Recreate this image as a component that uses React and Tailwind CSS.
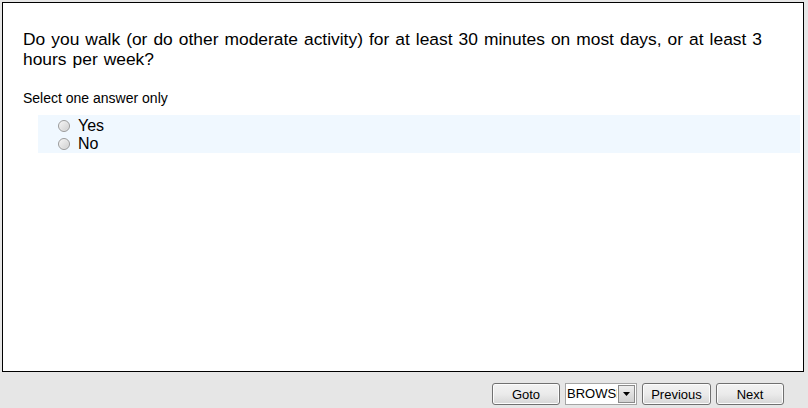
import React from "react";

function Radio() {
  return (
    <span className="inline-block w-[12px] h-[12px] rounded-full border border-[#9a9a9a] bg-gradient-to-br from-[#f6f6f6] to-[#cfcfcf] shadow-[inset_0_0_1px_#fff]" />
  );
}

function Btn({ children, w }) {
  return (
    <button
      className="h-[22px] shrink-0 rounded-[3px] border border-[#707070] bg-gradient-to-b from-[#f2f2f2] via-[#ebebeb] to-[#d6d6d6] text-[13px] text-black leading-none shadow-[inset_0_0_0_1px_#fcfcfc]"
      style={{ width: w }}
    >
      {children}
    </button>
  );
}

export default function App() {
  return (
    <div
      className="w-[808px] h-[408px] bg-[#e6e6e6] pt-[2px] pl-[2px] flex flex-col overflow-hidden"
      style={{ fontFamily: '"Liberation Sans", Arial, sans-serif' }}
    >
      <div className="w-[802px] h-[370px] border border-black bg-white shrink-0">
        <div className="pl-[20px] pt-[26px] pr-[20px] text-[17.4px] leading-[20px] [word-spacing:1.2px] text-black">
          Do you walk (or do other moderate activity) for at least 30 minutes on most days, or at least 3 hours per week?
        </div>
        <div className="pl-[20px] mt-[21px] text-[14px] leading-[16px] text-black">
          Select one answer only
        </div>
        <div className="ml-[35px] mr-[3px] mt-[9px] pt-[2px] bg-[#f0f8ff]">
          <div className="flex items-center h-[18px] pl-[20px] text-[16px] text-black">
            <Radio />
            <span className="ml-[8px]">Yes</span>
          </div>
          <div className="flex items-center h-[18px] pl-[20px] text-[16px] text-black">
            <Radio />
            <span className="ml-[8px]">No</span>
          </div>
        </div>
      </div>
      <div className="flex items-start pt-[11px] pl-[490px] gap-[5px]">
        <Btn w="68px">Goto</Btn>
        <div className="w-[72px] h-[22px] shrink-0 flex items-stretch bg-white border border-[#a5a5a5]">
          <div className="flex-1 overflow-hidden pl-[1px] text-[13px] leading-[20px] text-black whitespace-nowrap">
            BROWSE
          </div>
          <div className="w-[17px] m-[1px] border border-[#8a8a8a] bg-gradient-to-b from-[#eeeeee] to-[#d0d0d0] flex items-center justify-center">
            <svg width="7" height="4" viewBox="0 0 7 4">
              <path d="M0 0H7L3.5 4Z" fill="#000" />
            </svg>
          </div>
        </div>
        <Btn w="69px">Previous</Btn>
        <Btn w="68px">Next</Btn>
      </div>
    </div>
  );
}
